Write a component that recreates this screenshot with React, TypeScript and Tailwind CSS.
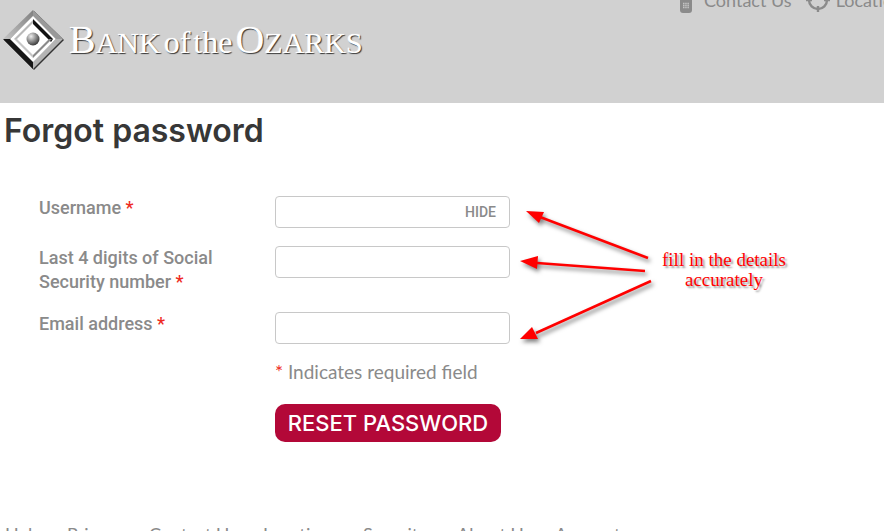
import { useState } from 'react';

const footerLinks = [
  { label: 'Help', width: 'w-[62px]' },
  { label: 'Privacy', width: 'w-[82px]' },
  { label: 'Contact Us', width: 'w-[114px]' },
  { label: 'Locations', width: 'w-[100px]' },
  { label: 'Security', width: 'w-[94px]' },
  { label: 'About Us', width: 'w-[98px]' },
  { label: 'Account', width: 'w-[100px]' },
];

const inputClass =
  'h-8 w-full rounded border border-[#c8c8c8] bg-white px-3 text-base text-[#555] outline-none focus:border-[#888]';

function LogoMark() {
  return (
    <svg width="62" height="62" viewBox="0 0 62 62" className="shrink-0" aria-hidden="true">
      <defs>
        <linearGradient id="edge" x1="1" y1="0" x2="0" y2="1">
          <stop offset="0" stopColor="#808080" />
          <stop offset="1" stopColor="#c4c4c4" />
        </linearGradient>
        <radialGradient id="ball" cx="0.35" cy="0.3" r="0.75">
          <stop offset="0" stopColor="#eee" />
          <stop offset="0.45" stopColor="#999" />
          <stop offset="1" stopColor="#333" />
        </radialGradient>
      </defs>
      <path d="M31 2 61 31 31 61 1 31Z" fill="#333" />
      <path d="M30 1 0 30 7 30 30 8Z" fill="url(#edge)" />
      <path d="M30 1 60 30 53 30 30 8Z" fill="#999" />
      <path d="M0 30 30 60 30 52 7 30Z" fill="#161616" />
      <path d="M60 30 30 60 30 52 53 30Z" fill="#b4b4b4" />
      <path d="M30 7 53 30 30 53 7 30Z" fill="#fff" />
      <path d="M30 11 11 30 14 30 30 14Z" fill="#b9b9b9" />
      <path d="M30 10 50 30 48 33 30 15Z" fill="#111" />
      <path d="M11 30 30 49 30 46 14 30Z" fill="#c6c6c6" />
      <path d="M30 49 49 30 46 30 30 46Z" fill="#8a8a8a" />
      <circle cx="30" cy="30" r="6.5" fill="url(#ball)" />
    </svg>
  );
}

function Logo() {
  return (
    <a href="#" aria-label="Bank of the Ozarks" className="flex items-center gap-1">
      <LogoMark />
      <span className="flex items-baseline gap-[3px] pt-1 whitespace-nowrap font-['Liberation_Serif',serif] text-[30px] leading-[60px] text-white [text-shadow:1px_1px_1px_#333,0_0_1px_#fff]">
        <span>
          <span className="text-[40px]">B</span>ANK
        </span>
        <span className="text-[32px]">of</span>
        <span className="text-[32px]">the</span>
        <span>
          <span className="text-[40px]">O</span>ZARKS
        </span>
      </span>
    </a>
  );
}

function PhoneIcon() {
  return (
    <svg width="12" height="25" viewBox="0 0 12 25" aria-hidden="true">
      <rect x="0" y="0" width="12" height="25" rx="3" fill="#8b8b8b" />
      <path d="M3 15.5h6M3 17.5h6M3 19.5h6" stroke="#c4c4c4" strokeWidth="1.3" strokeDasharray="1.5 .7" />
    </svg>
  );
}

function TargetIcon() {
  return (
    <svg width="24" height="24" viewBox="0 0 24 24" fill="none" stroke="#8b8b8b" strokeWidth="2.4" aria-hidden="true">
      <circle cx="12" cy="12" r="9" />
      <path d="M12 0v6M12 18v6M0 12h6M18 12h6" />
    </svg>
  );
}

function Arrows() {
  return (
    <svg width="134" height="140" viewBox="0 0 134 140" className="drop-shadow-[2px_3px_2px_#00000080]" aria-hidden="true">
      <g stroke="#f00" strokeWidth="2.5">
        <path d="M20 11 128 52" />
        <path d="M17 57 125 65" />
        <path d="M16 127 131 75" />
      </g>
      <g fill="#f00">
        <path d="M6 5 24 6 19 17Z" />
        <path d="M0 55 18 50 17 63Z" />
        <path d="M0 133 12 121 18 133Z" />
      </g>
    </svg>
  );
}

function Required() {
  return <span className="text-[#ee2a22]">*</span>;
}

export default function App() {
  const [username, setUsername] = useState('');
  const [hidden, setHidden] = useState(false);

  return (
    <div className="h-screen overflow-hidden bg-white font-[Lato,sans-serif] text-[#8a8a8a]">
      <header className="flex h-[103px] items-start justify-between overflow-hidden bg-[#d1d1d1]">
        <div className="pt-[6px] pl-[3px]">
          <Logo />
        </div>
        <nav className="-mt-3 flex w-[204px] shrink-0 gap-[14px] text-lg leading-6 whitespace-nowrap">
          <a href="#" className="flex gap-3">
            <PhoneIcon />
            Contact Us
          </a>
          <a href="#" className="flex gap-[6px]">
            <TargetIcon />
            Locations
          </a>
        </nav>
      </header>

      <main>
        <h1 className="px-1 pt-2 font-[Inter,sans-serif] text-[32px] leading-10 font-semibold text-[#373737]">
          Forgot password
        </h1>

        <div className="flex pt-[45px] pl-[39px]">
          <form className="w-[471px] shrink-0" onSubmit={(e) => e.preventDefault()}>
            <div className="grid grid-cols-[236px_235px] font-[Roboto,sans-serif] text-lg leading-6 font-medium">
              <label htmlFor="username" className="h-[50px]">
                Username <Required />
              </label>
              <div className="relative">
                <input
                  id="username"
                  type={hidden ? 'password' : 'text'}
                  value={username}
                  onChange={(e) => setUsername(e.target.value)}
                  className={inputClass}
                />
                <button
                  type="button"
                  onClick={() => setHidden(!hidden)}
                  className="absolute top-0 right-[14px] h-8 text-sm font-medium"
                >
                  {hidden ? 'SHOW' : 'HIDE'}
                </button>
              </div>

              <label htmlFor="ssn" className="h-[66px] pr-10">
                Last 4 digits of Social Security number <Required />
              </label>
              <div>
                <input id="ssn" type="text" maxLength={4} className={inputClass} />
              </div>

              <label htmlFor="email" className="h-12">
                Email address <Required />
              </label>
              <div>
                <input id="email" type="email" className={inputClass} />
              </div>
            </div>

            <div className="pl-[236px]">
              <p className="text-[19px] leading-6">
                <Required /> Indicates required field
              </p>
              <button
                type="submit"
                className="mt-5 h-[38px] w-[226px] rounded-[10px] bg-[#b30838] font-[Inter,sans-serif] text-[22px] leading-6 font-medium whitespace-nowrap text-white"
              >
                RESET PASSWORD
              </button>
            </div>
          </form>

          <div className="flex shrink-0 gap-2 pt-[10px] pl-[10px]">
            <Arrows />
            <p className="pt-11 text-center font-['Liberation_Serif',serif] text-[19px] leading-5 text-[#f00] [text-shadow:2px_2px_2px_#999]">
              fill in the details
              <br />
              accurately
            </p>
          </div>
        </div>
      </main>

      <footer className="flex pt-20 pl-[5px] text-lg leading-6 whitespace-nowrap">
        {footerLinks.map((link) => (
          <a key={link.label} href="#" className={link.width}>
            {link.label}
          </a>
        ))}
      </footer>
    </div>
  );
}
